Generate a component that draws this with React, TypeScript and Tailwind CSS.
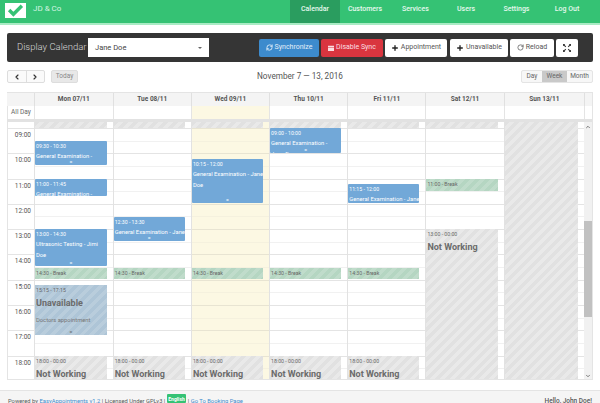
import { ChevronDown, ChevronLeft, ChevronRight, ChevronUp, Plus, RefreshCw, RotateCw } from "lucide-react";

const days = [
  { name: "Mon 07/11" },
  { name: "Tue 08/11" },
  { name: "Wed 09/11", today: true },
  { name: "Thu 10/11" },
  { name: "Fri 11/11" },
  { name: "Sat 12/11" },
  { name: "Sun 13/11" },
];

const navItems = [
  { label: "Calendar", width: "w-[50px]", active: true },
  { label: "Customers", width: "w-[50px]" },
  { label: "Services", width: "w-[51px]" },
  { label: "Users", width: "w-[50px]" },
  { label: "Settings", width: "w-[51px]" },
  { label: "Log Out", width: "w-[50px]" },
];

const hours = ["09:00", "10:00", "11:00", "12:00", "13:00", "14:00", "15:00", "16:00", "17:00", "18:00"];

type Block = {
  day: number;
  top: number;
  height: number;
  time?: string;
  title?: string;
  note?: string;
  kind: "event" | "break" | "off" | "unavailable";
  handle?: boolean;
};

const blocks: Block[] = [
  { day: 0, top: 19, height: 24, time: "09:30 - 10:30", title: "General Examination -\nJane Doe", kind: "event", handle: true },
  { day: 0, top: 57, height: 17, time: "11:00 - 11:45", title: "General Examination -\nJane Doe", kind: "event" },
  { day: 0, top: 107, height: 37, time: "13:00 - 14:30", title: "Ultrasonic Testing - Jimi\nDoe", kind: "event", handle: true },
  { day: 0, top: 146, height: 11, time: "14:30 - Break", kind: "break" },
  { day: 0, top: 163, height: 50, time: "15:15 - 17:15", title: "Unavailable", note: "Doctors appointment", kind: "unavailable", handle: true },
  { day: 0, top: 234, height: 23, time: "18:00 - 00:00", title: "Not Working", kind: "off" },
  { day: 1, top: 95, height: 24, time: "12:30 - 13:30", title: "General Examination - Jane\nDoe", kind: "event", handle: true },
  { day: 1, top: 146, height: 11, time: "14:30 - Break", kind: "break" },
  { day: 1, top: 234, height: 23, time: "18:00 - 00:00", title: "Not Working", kind: "off" },
  { day: 2, top: 37, height: 44, time: "10:15 - 12:00", title: "General Examination - Jane\nDoe", kind: "event", handle: true },
  { day: 2, top: 146, height: 11, time: "14:30 - Break", kind: "break" },
  { day: 2, top: 234, height: 23, time: "18:00 - 00:00", title: "Not Working", kind: "off" },
  { day: 3, top: 6, height: 25, time: "09:00 - 10:00", title: "General Examination -\nJane Doe", kind: "event", handle: true },
  { day: 3, top: 146, height: 11, time: "14:30 - Break", kind: "break" },
  { day: 3, top: 234, height: 23, time: "18:00 - 00:00", title: "Not Working", kind: "off" },
  { day: 4, top: 62, height: 19, time: "11:15 - 12:00", title: "General Examination - Jane\nDoe", kind: "event" },
  { day: 4, top: 146, height: 11, time: "14:30 - Break", kind: "break" },
  { day: 4, top: 234, height: 23, time: "18:00 - 00:00", title: "Not Working", kind: "off" },
  { day: 5, top: 57, height: 12, time: "11:00 - Break", kind: "break" },
  { day: 5, top: 107, height: 150, time: "13:00 - 00:00", title: "Not Working", kind: "off" },
  { day: 6, top: 0, height: 257, kind: "off" },
];

const kindClass = {
  event: "bg-[#72a8d8] text-white rounded-[1px]",
  break: "bg-[repeating-linear-gradient(135deg,#b5d6c2_0,#b5d6c2_3.5px,#c0dccb_3.5px,#c0dccb_7px)] text-[#666]",
  off: "bg-[repeating-linear-gradient(135deg,#e1e1e1_0,#e1e1e1_3.5px,#e9e9e9_3.5px,#e9e9e9_7px)] text-[#666]",
  unavailable: "bg-[repeating-linear-gradient(135deg,#aec5d7_0,#aec5d7_3.5px,#b9cddc_3.5px,#b9cddc_7px)] text-[#666]",
};

const weekCols = "grid grid-cols-[27px_78.7px_repeat(5,78.2px)_80.5px_8px]";

function CalendarBlock({ block }: { block: Block }) {
  const big = block.kind === "off" || block.kind === "unavailable";
  return (
    <div
      className={`absolute left-0 right-[6px] overflow-hidden px-px ${kindClass[block.kind]}`}
      style={{ top: block.top, height: block.height }}
    >
      {block.time && <div className="text-[5.2px] leading-[10px] whitespace-nowrap">{block.time}</div>}
      {block.title && (
        <div className={big ? "text-[9px] leading-[16px] font-bold text-[#6b6b6b]" : "text-[5.8px] leading-[10.7px] whitespace-pre"}>
          {block.title}
        </div>
      )}
      {block.note && <div className="text-[5.8px] leading-[16px] mt-[1px] text-[#777]">{block.note}</div>}
      {block.handle && (
        <div className="absolute left-0 right-0 bottom-0 text-center text-[5px] leading-[5px] font-bold">=</div>
      )}
    </div>
  );
}

function SlotLines({ yellow }: { yellow?: boolean }) {
  return (
    <>
      <div className="h-[6px]" />
      {Array.from({ length: 20 }).map((_, i) => (
        <div
          key={i}
          className={`h-[12.65px] border-t ${i % 2 === 0 ? (yellow ? "border-[#e8e4d2]" : "border-[#e4e4e4]") : yellow ? "border-[#f5f1de]" : "border-[#f1f1f1]"}`}
        />
      ))}
    </>
  );
}

function ToolButton({ children, className }: { children: React.ReactNode; className?: string }) {
  return (
    <button className={`h-[18px] flex items-center justify-center gap-[2px] rounded-[2px] text-[7px] ${className}`}>
      {children}
    </button>
  );
}

export default function App() {
  return (
    <div className="h-[403px] w-[600px] overflow-hidden bg-white font-['Roboto',sans-serif] text-[#333] flex flex-col">
      {/* Header */}
      <header className="h-[25px] shrink-0 bg-[#35c274] border-b-2 border-[#a9ebc4] flex justify-between pl-[5px] pr-[8px]">
        <div className="flex items-start pt-[3px] gap-[7px]">
          <div className="w-[21px] h-[15px] bg-white flex items-center justify-center">
            <svg viewBox="0 0 20 15" className="w-[17px] h-[13px]">
              <path d="M2.5 7 L7.5 12 L17.5 2" fill="none" stroke="#35c274" strokeWidth="4" />
            </svg>
          </div>
          <span className="text-[8px] text-[#d6f5e3] leading-[10px] pt-[1px]">JD &amp; Co</span>
        </div>
        <nav className="flex">
          {navItems.map((item) => (
            <a
              key={item.label}
              className={`${item.width} h-[23px] flex justify-center pt-[4px] text-[7px] font-medium leading-[10px] text-[#e6f9ee] ${item.active ? "bg-[#2a9d5f]" : ""}`}
            >
              {item.label}
            </a>
          ))}
        </nav>
      </header>

      <main className="flex-1 px-[7px] pt-[8px] min-h-0">
        {/* Toolbar */}
        <div className="h-[29px] bg-[#353535] rounded-[2px] flex items-center pl-[10px] pr-[15px]">
          <span className="text-[9.5px] font-light text-[#d8d8d8] w-[71px] whitespace-nowrap">Display Calendar</span>
          <div className="w-[121px] h-[19px] bg-white flex items-center justify-between px-[7px] text-[7.5px] text-[#444]">
            Jane Doe
            <span className="border-x-[2px] border-t-[2px] border-x-transparent border-t-[#666]" />
          </div>
          <div className="flex-1 flex justify-end gap-[2px]">
            <ToolButton className="w-[60px] bg-[#3d8bcd] text-[#e3eff9]">
              <RefreshCw size={7} strokeWidth={3} />
              Synchronize
            </ToolButton>
            <ToolButton className="w-[62px] bg-[#d9353f] text-[#fbdfe1]">
              <svg viewBox="0 0 8 8" className="w-[6px] h-[6px]" fill="#fbdfe1">
                <path d="M0 1h8v1.5H0zM0 3.2h8V8H0z" />
              </svg>
              Disable Sync
            </ToolButton>
            <ToolButton className="w-[62px] bg-white text-[#555]">
              <Plus size={8} strokeWidth={4} color="#222" />
              Appointment
            </ToolButton>
            <ToolButton className="w-[58px] ml-[1px] bg-white text-[#555]">
              <Plus size={8} strokeWidth={4} color="#222" />
              Unavailable
            </ToolButton>
            <ToolButton className="w-[44px] bg-white text-[#555]">
              <RotateCw size={7} strokeWidth={2.5} />
              Reload
            </ToolButton>
            <ToolButton className="w-[22px] bg-white">
              <svg viewBox="0 0 8 8" className="w-[8px] h-[8px]" fill="none" stroke="#333" strokeWidth="1.1">
                <path d="M0.6 0.6 L2.8 2.8 M7.4 0.6 L5.2 2.8 M0.6 7.4 L2.8 5.2 M7.4 7.4 L5.2 5.2" />
                <path d="M0.3 2V.3H2M6 .3h1.7V2M7.7 6v1.7H6M2 7.7H.3V6" />
              </svg>
            </ToolButton>
          </div>
        </div>

        {/* Calendar controls */}
        <div className="h-[13px] mt-[8px] flex items-center justify-between">
          <div className="flex items-center gap-[6px] w-[160px]">
            <div className="flex h-[13px] w-[38px] border border-[#ddd] rounded-[2px] bg-[#fafafa]">
              <span className="flex-1 flex items-center justify-center border-r border-[#ddd]">
                <ChevronLeft size={8} strokeWidth={3.5} color="#333" />
              </span>
              <span className="flex-1 flex items-center justify-center">
                <ChevronRight size={8} strokeWidth={3.5} color="#333" />
              </span>
            </div>
            <span className="w-[27px] h-[13px] rounded-[2px] bg-[#e8e8e8] border border-[#ddd] text-[6.5px] text-[#888] flex items-center justify-center">
              Today
            </span>
          </div>
          <h2 className="text-[8.2px] text-[#555] leading-[13px]">November 7 — 13, 2016</h2>
          <div className="w-[160px] flex justify-end">
            <div className="flex h-[13px] w-[72px] rounded-[2px] border border-[#e4e4e4] bg-[#f7f7f7] text-[6.5px] text-[#666]">
              <span className="w-[20px] flex items-center justify-center">Day</span>
              <span className="w-[25px] flex items-center justify-center bg-[#c9c9c9]">Week</span>
              <span className="flex-1 flex items-center justify-center">Month</span>
            </div>
          </div>
        </div>

        {/* Week grid */}
        <div className="mt-[9px] w-[586px] border-b border-r border-[#e4e4e4]">
          <div className={`${weekCols} h-[14px] bg-[#f4f4f4] border-t border-[#e4e4e4]`}>
            <div />
            {days.map((d) => (
              <div key={d.name} className="border-l border-[#e0e0e0] flex items-center justify-center text-[6.5px] font-bold text-[#555]">
                {d.name}
              </div>
            ))}
            <div className="border-l border-[#e0e0e0]" />
          </div>
          <div className={`${weekCols} h-[13px] border-b-[3px] border-[#e2e2e2] box-content`}>
            <div className="text-[6.5px] text-[#666] text-center leading-[13px] border-l border-[#e4e4e4]">All Day</div>
            {days.map((d) => (
              <div key={d.name} className={`border-l border-[#e4e4e4] ${d.today ? "bg-[#fcf8e3]" : ""}`} />
            ))}
            <div className="border-l border-[#e4e4e4]" />
          </div>
          <div className={`${weekCols} h-[257px] overflow-hidden`}>
            <div className="border-l border-[#e4e4e4]">
              <div className="h-[6px]" />
              {hours.map((h) => (
                <div key={h} className="h-[25.3px] border-t border-[#e4e4e4] pr-[3px] text-right text-[6.5px] leading-[13px] text-[#555]">
                  {h}
                </div>
              ))}
            </div>
            {days.map((d, i) => (
              <div key={d.name} className={`relative border-l border-[#e2e2e2] ${d.today ? "bg-[#fcf8e3]" : "bg-white"}`}>
                <SlotLines yellow={d.today} />
                {i < 6 && <div className={`absolute top-0 left-0 right-[6px] h-[6px] ${kindClass.off}`} />}
                {blocks
                  .filter((b) => b.day === i)
                  .map((b) => (
                    <CalendarBlock key={`${b.day}-${b.top}`} block={b} />
                  ))}
              </div>
            ))}
            {/* Scrollbar */}
            <div className="bg-[#f1f1f1] flex flex-col items-center">
              <ChevronUp size={6} strokeWidth={3} color="#555" className="mt-[2px]" />
              <div className="h-[91px]" />
              <div className="w-full h-[96px] bg-[#c1c1c1]" />
              <div className="flex-1" />
              <ChevronDown size={6} strokeWidth={3} color="#555" className="mb-[2px]" />
            </div>
          </div>
        </div>
      </main>

      {/* Footer */}
      <footer className="h-[13px] shrink-0 bg-[#f5f5f5] border-t border-[#e4e4e4] flex justify-between pl-[8px] pr-[8px] pt-[5px] text-[5.8px] leading-[10px] text-[#555] whitespace-nowrap">
        <div className="flex gap-[1.5px]">
          <span>Powered by</span>
          <a className="text-[#3d8bcd]">EasyAppointments v1.2</a>
          <span>| Licensed Under GPLv3 |</span>
          <span className="bg-[#35c274] text-white text-[5px] px-[1.5px] font-bold rounded-[1px] -mt-[2px]">English</span>
          <span>|</span>
          <a className="text-[#3d8bcd]">Go To Booking Page</a>
        </div>
        <span className="text-[6.5px] font-medium">Hello, John Doe!</span>
      </footer>
    </div>
  );
}
